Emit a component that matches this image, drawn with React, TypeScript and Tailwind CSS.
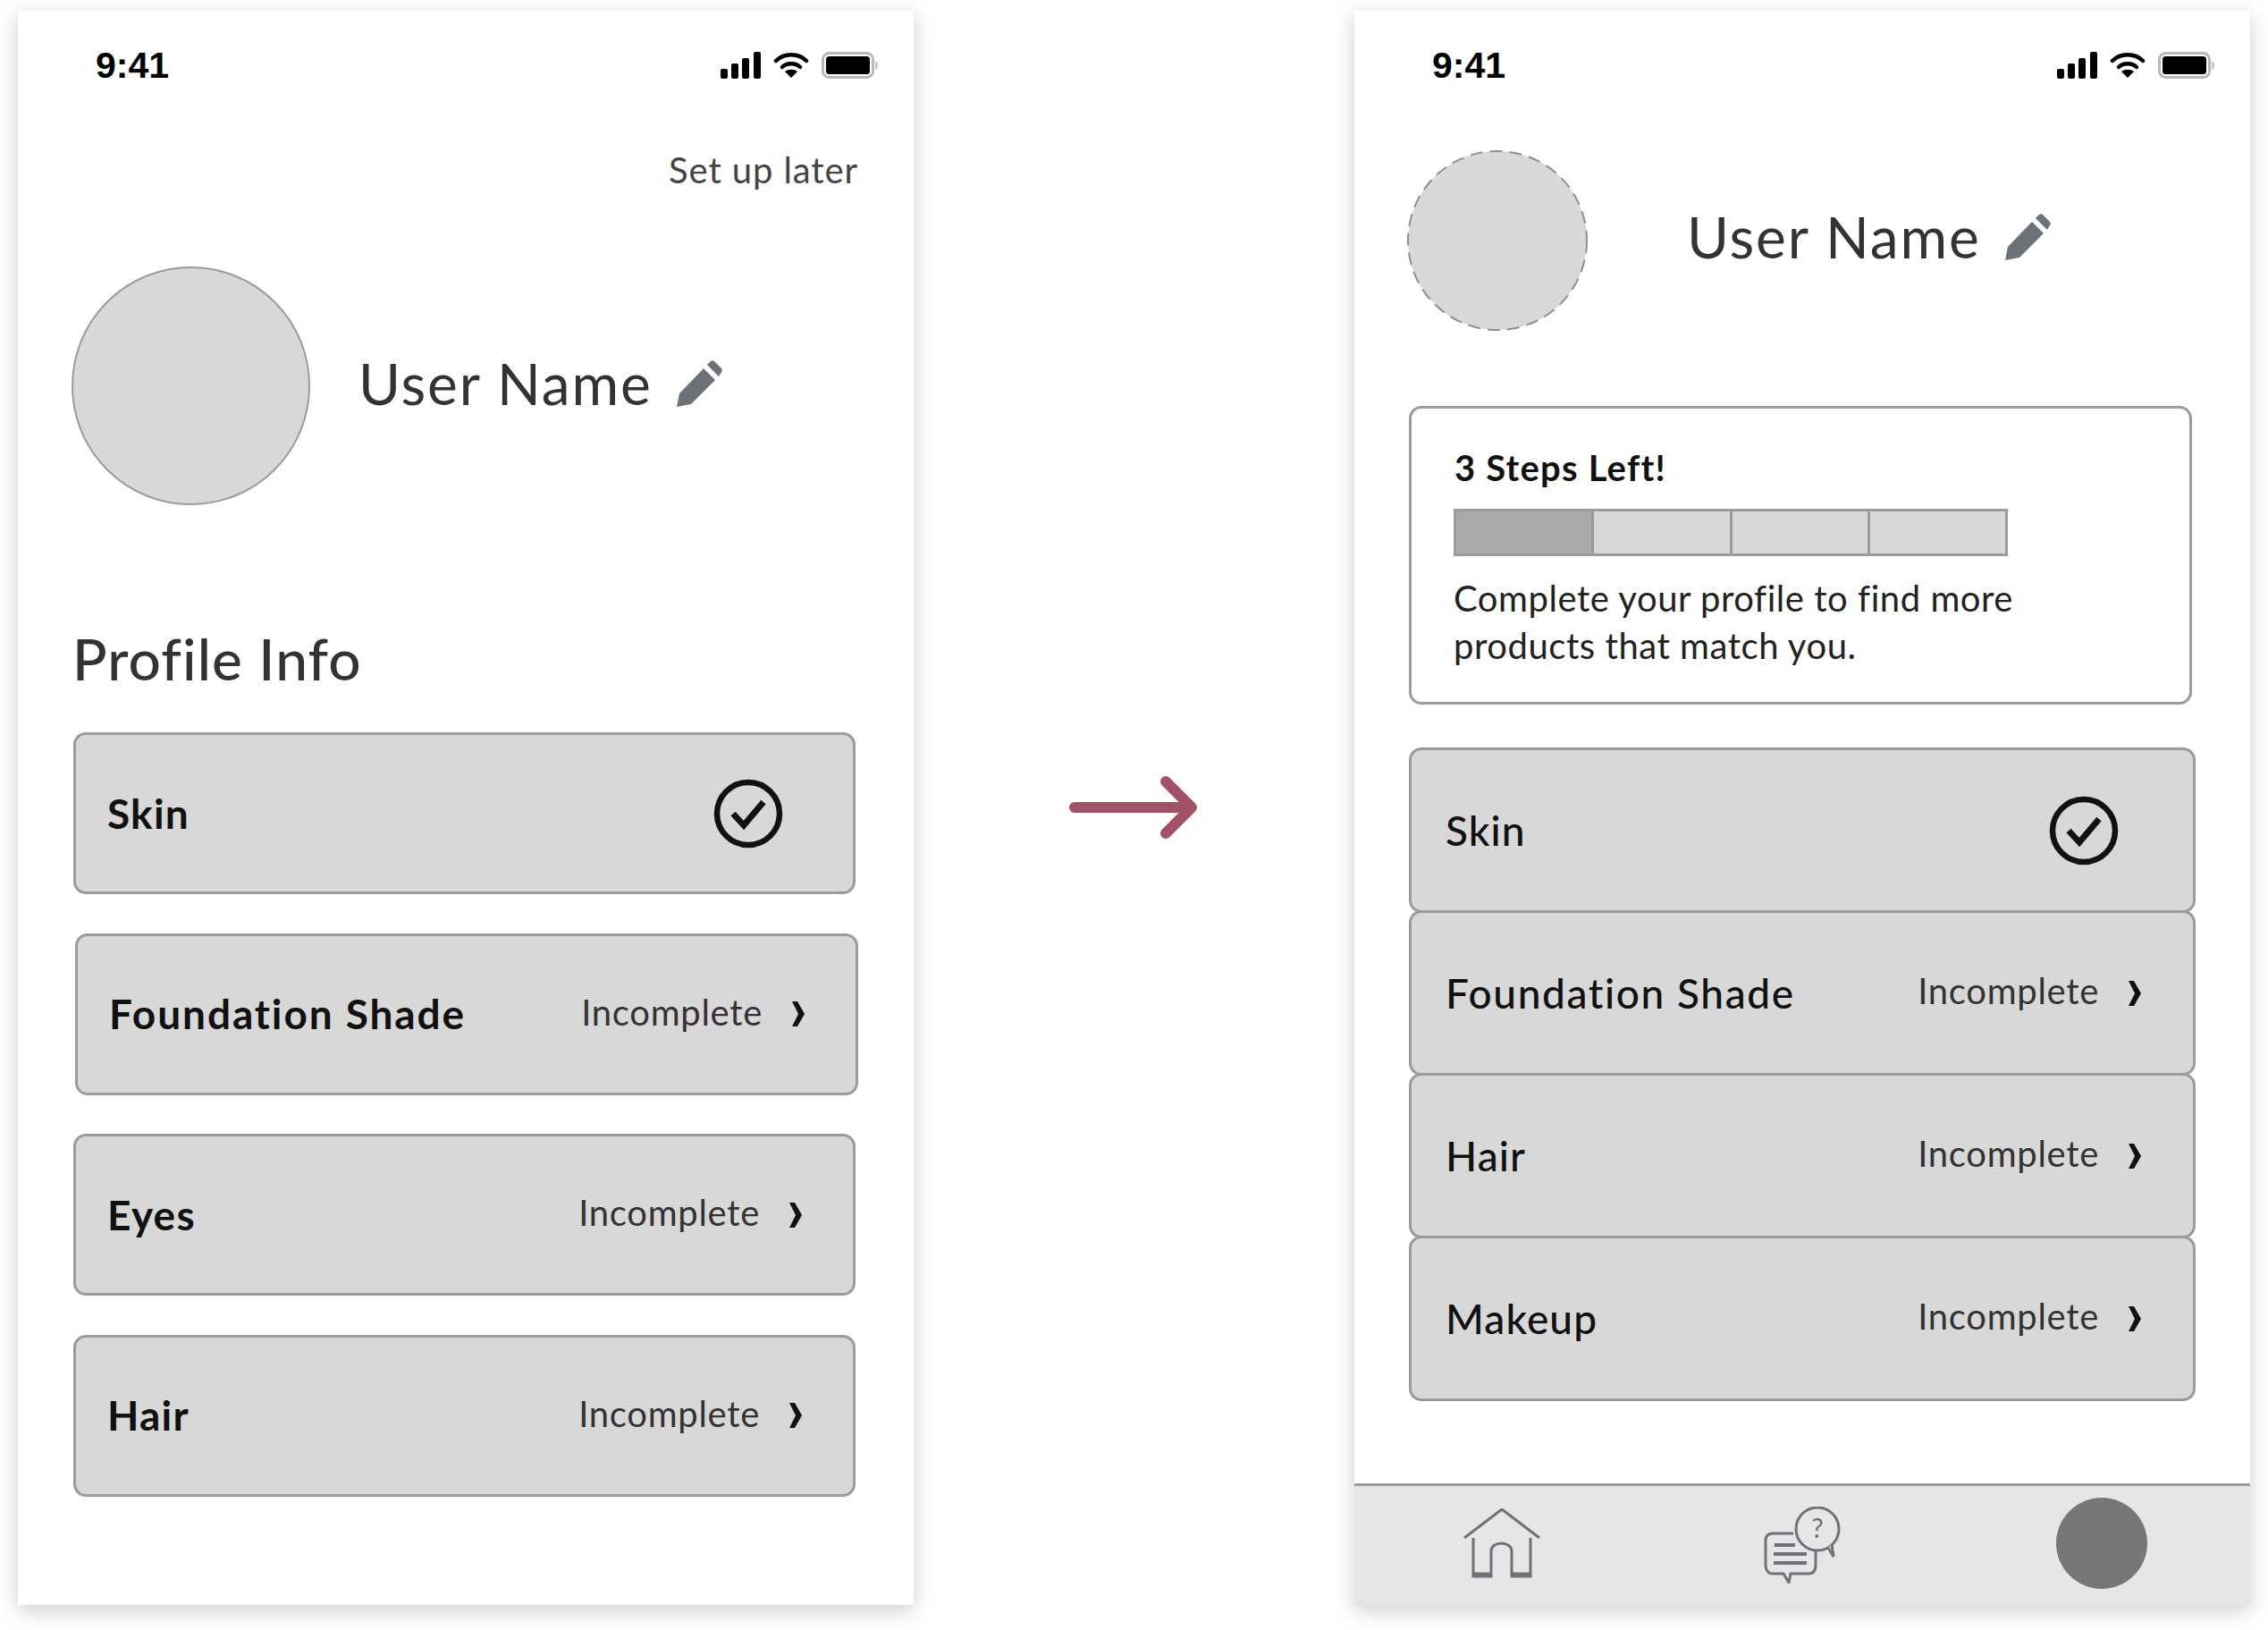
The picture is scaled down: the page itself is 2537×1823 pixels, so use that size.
import React from 'react';

const ICON_GRAY = '#6d7278';

const StatusBar = () => (
  <div className="flex items-center justify-between h-[62px] mt-[30px] pl-[87px] pr-[39px]">
    <span className="font-['Liberation_Sans',sans-serif] font-bold text-[41px] leading-none text-black">9:41</span>
    <div className="flex items-center gap-[14px] pr-[1px]">
      <svg width="45" height="30" viewBox="0 0 45 30">
        <rect x="0" y="19" width="8" height="11" rx="2" fill="#000" />
        <rect x="12" y="13" width="8" height="17" rx="2" fill="#000" />
        <rect x="24" y="7" width="8" height="23" rx="2" fill="#000" />
        <rect x="37" y="0" width="8" height="30" rx="2" fill="#000" />
      </svg>
      <svg width="40" height="30" viewBox="0 0 40 30">
        <path d="M3 10 C12 1 28 1 37 10" fill="none" stroke="#000" strokeWidth="4.5" strokeLinecap="round" />
        <path d="M10 17 C15 12 25 12 30 17" fill="none" stroke="#000" strokeWidth="4.5" strokeLinecap="round" />
        <path d="M20 29 L13 22 C17 19 23 19 27 22 Z" fill="#000" />
      </svg>
      <svg width="63" height="30" viewBox="0 0 63 30">
        <rect x="1.5" y="1.5" width="56" height="27" rx="7" fill="none" stroke="#b8b8b8" strokeWidth="3" />
        <rect x="5" y="5" width="49" height="20" rx="3.5" fill="#000" />
        <path d="M60 10 C62 11 63 13 63 15 C63 17 62 19 60 20 Z" fill="#c4c4c4" />
      </svg>
    </div>
  </div>
);

const Pencil = () => (
  <svg width="52" height="52" viewBox="0 0 52 52">
    <path d="M0 52 L3 37 L30 9 L43 22 L16 49 Z" fill={ICON_GRAY} />
    <path d="M34 5 L38 1 C39 0 41 0 42 1 L50 9 C51 10 51 12 50 13 L47 18 Z" fill={ICON_GRAY} />
  </svg>
);

const UserName = ({ className }: { className: string }) => (
  <div className={`flex items-center ${className}`}>
    <span className="font-['Lato',sans-serif] font-normal text-[64px] leading-[80px] tracking-[1.9px] text-[#333]">User Name</span>
    <span className="ml-[27px]"><Pencil /></span>
  </div>
);

const Check = () => (
  <svg width="78" height="78" viewBox="0 0 78 78">
    <circle cx="39" cy="39" r="35" fill="none" stroke="#111" strokeWidth="6.5" />
    <path d="M22 39 L34 52 L56 26" fill="none" stroke="#111" strokeWidth="7" />
  </svg>
);

const Chevron = () => (
  <svg width="15" height="30" viewBox="0 0 15 30">
    <path d="M1 1 L7 1 L15 15 L7 29 L1 29 L8 15 Z" fill="#111" />
  </svg>
);

type RowProps = {
  label: string;
  done?: boolean;
  labelStyle: string;
  className: string;
  pad: string;
};

const Row = ({ label, done, labelStyle, className, pad }: RowProps) => (
  <div className={`flex items-center justify-between bg-[#d8d8d8] border-[3px] border-[#9b9b9b] rounded-[14px] ${pad} ${className}`}>
    <span className={`font-['Lato',sans-serif] text-[46px] leading-none text-[#111] ${labelStyle}`}>{label}</span>
    {done ? (
      <Check />
    ) : (
      <div className="flex items-center">
        <span className="font-['Lato',sans-serif] text-[40px] leading-none tracking-[0.7px] text-[#333] mb-[5px]">Incomplete</span>
        <span className="ml-[32px]"><Chevron /></span>
      </div>
    )}
  </div>
);

const HomeIcon = () => (
  <svg width="86" height="78" viewBox="0 0 86 78" fill="none" stroke={ICON_GRAY} strokeWidth="3">
    <path d="M1 33 L43 1 L85 33" />
    <path d="M11 33 V76 H31 V48 C31 36 54 36 54 48 V76 H75 V33" />
    <path d="M11 74 H31 M54 74 H75" strokeWidth="5" />
  </svg>
);

const ChatIcon = () => (
  <svg width="86" height="86" viewBox="0 0 86 86" fill="none" stroke={ICON_GRAY} strokeWidth="3">
    <path d="M33 30 H10 C4 30 2 33 2 38 V65 C2 71 5 75 10 75 H22 L28 85 L30 75 H50 C56 75 58 71 58 65 V49" />
    <path d="M12 43 H35 M11 53 H48 M11 63 H48" strokeWidth="4" />
    <circle cx="60" cy="25" r="24" fill="#e6e6e6" />
    <path d="M72 46 L78 56 L76 42" fill="#e6e6e6" />
    <text x="60" y="35" textAnchor="middle" fontSize="30" fill={ICON_GRAY} stroke="none" fontFamily="Lato, sans-serif">?</text>
  </svg>
);

const Arrow = () => (
  <svg width="146" height="76" viewBox="0 0 146 76" fill="none" stroke="#a25268" strokeWidth="12" strokeLinecap="round" strokeLinejoin="round">
    <path d="M6 38 H134" />
    <path d="M108 9 L137 38 L108 67" />
  </svg>
);

const LeftPhone = () => (
  <div className="flex flex-col w-[1002px] h-[1783px] bg-white shadow-[0_6px_22px_rgba(0,0,0,0.2)]">
    <StatusBar />
    <div className="mt-[62px] pr-[62px] text-right font-['Lato',sans-serif] text-[40px] leading-[48px] tracking-[0.9px] text-[#444]">Set up later</div>
    <div className="flex items-center mt-[84px] pl-[60px]">
      <div className="w-[267px] h-[267px] rounded-full bg-[#d8d8d8] border-2 border-[#9b9b9b]" />
      <div className="-translate-y-[3px]">
        <UserName className="ml-[54px]" />
      </div>
    </div>
    <h2 className="mt-[132px] pl-[61px] font-['Lato',sans-serif] font-medium text-[64px] leading-[80px] tracking-[1.1px] text-[#333]">Profile Info</h2>
    <div className="flex flex-col gap-[43.5px] mt-[42px] pl-[62px]">
      <Row label="Skin" done labelStyle="font-bold tracking-[1.2px]" className="w-[875px] h-[181px]" pad="pl-[35px] pr-[78px]" />
      <Row label="Foundation Shade" labelStyle="font-bold tracking-[1.9px]" className="w-[876px] h-[181px] ml-[2px]" pad="pl-[35px] pr-[57px]" />
      <Row label="Eyes" labelStyle="font-bold tracking-[1.2px]" className="w-[875px] h-[181px]" pad="pl-[35px] pr-[57px]" />
      <Row label="Hair" labelStyle="font-bold tracking-[1.2px]" className="w-[875px] h-[181px]" pad="pl-[35px] pr-[57px]" />
    </div>
  </div>
);

const steps = [true, false, false, false];

const RightPhone = () => (
  <div className="flex flex-col w-[1002px] h-[1783px] bg-white shadow-[0_6px_22px_rgba(0,0,0,0.2)]">
    <StatusBar />
    <div className="flex items-center mt-[64px] pl-[59px]">
      <svg width="202" height="202" viewBox="0 0 202 202">
        <circle cx="101" cy="101" r="100" fill="#d8d8d8" stroke="#8f8f8f" strokeWidth="2" strokeDasharray="14 8" />
      </svg>
      <div className="-translate-y-[4px]">
        <UserName className="ml-[111px]" />
      </div>
    </div>
    <div className="w-[876px] h-[334px] mt-[84px] ml-[61px] pl-[48px] pt-[41px] border-[3px] border-[#9b9b9b] rounded-[14px] bg-white">
      <div className="font-['Lato',sans-serif] font-bold text-[40px] leading-[50px] tracking-[1.2px] text-[#111]">3 Steps Left!</div>
      <div className="flex w-[620px] h-[53px] mt-[21px] -ml-[1px] border-[3px] border-[#9b9b9b] divide-x-[3px] divide-[#9b9b9b]">
        {steps.map((filled, i) => (
          <div key={i} className={filled ? 'flex-1 bg-[#aaa8a9]' : 'flex-1 bg-[#d8d8d8]'} />
        ))}
      </div>
      <p className="mt-[21px] -ml-[1px] font-['Lato',sans-serif] text-[40px] leading-[53px] tracking-[0.55px] text-[#222]">
        Complete your profile to find more
        <br />
        products that match you.
      </p>
    </div>
    <div className="flex flex-col mt-[48px] ml-[61px] w-[880px]">
      <Row label="Skin" done labelStyle="font-medium tracking-[1.1px]" className="h-[185px]" pad="pl-[38px] pr-[83px]" />
      <Row label="Foundation Shade" labelStyle="font-medium tracking-[1.6px]" className="h-[185px] -mt-[3px]" pad="pl-[38px] pr-[58px]" />
      <Row label="Hair" labelStyle="font-medium tracking-[1.1px]" className="h-[185px] -mt-[3px]" pad="pl-[38px] pr-[58px]" />
      <Row label="Makeup" labelStyle="font-medium tracking-[1.1px]" className="h-[185px] -mt-[3px]" pad="pl-[38px] pr-[58px]" />
    </div>
    <div className="flex items-center justify-between mt-auto h-[136px] pb-[6px] pl-[122px] pr-[115px] bg-[#e6e6e6] border-t-[3px] border-[#9b9b9b]">
      <HomeIcon />
      <span className="translate-x-[4px] translate-y-[2px]"><ChatIcon /></span>
      <div className="w-[102px] h-[102px] rounded-full bg-[#777777]" />
    </div>
  </div>
);

export default function App() {
  return (
    <div className="flex items-start w-[2537px] h-[1823px] pt-[12px] pl-[20px] bg-white">
      <LeftPhone />
      <div className="ml-[174px] mr-[173px] mt-[853px]">
        <Arrow />
      </div>
      <RightPhone />
    </div>
  );
}
